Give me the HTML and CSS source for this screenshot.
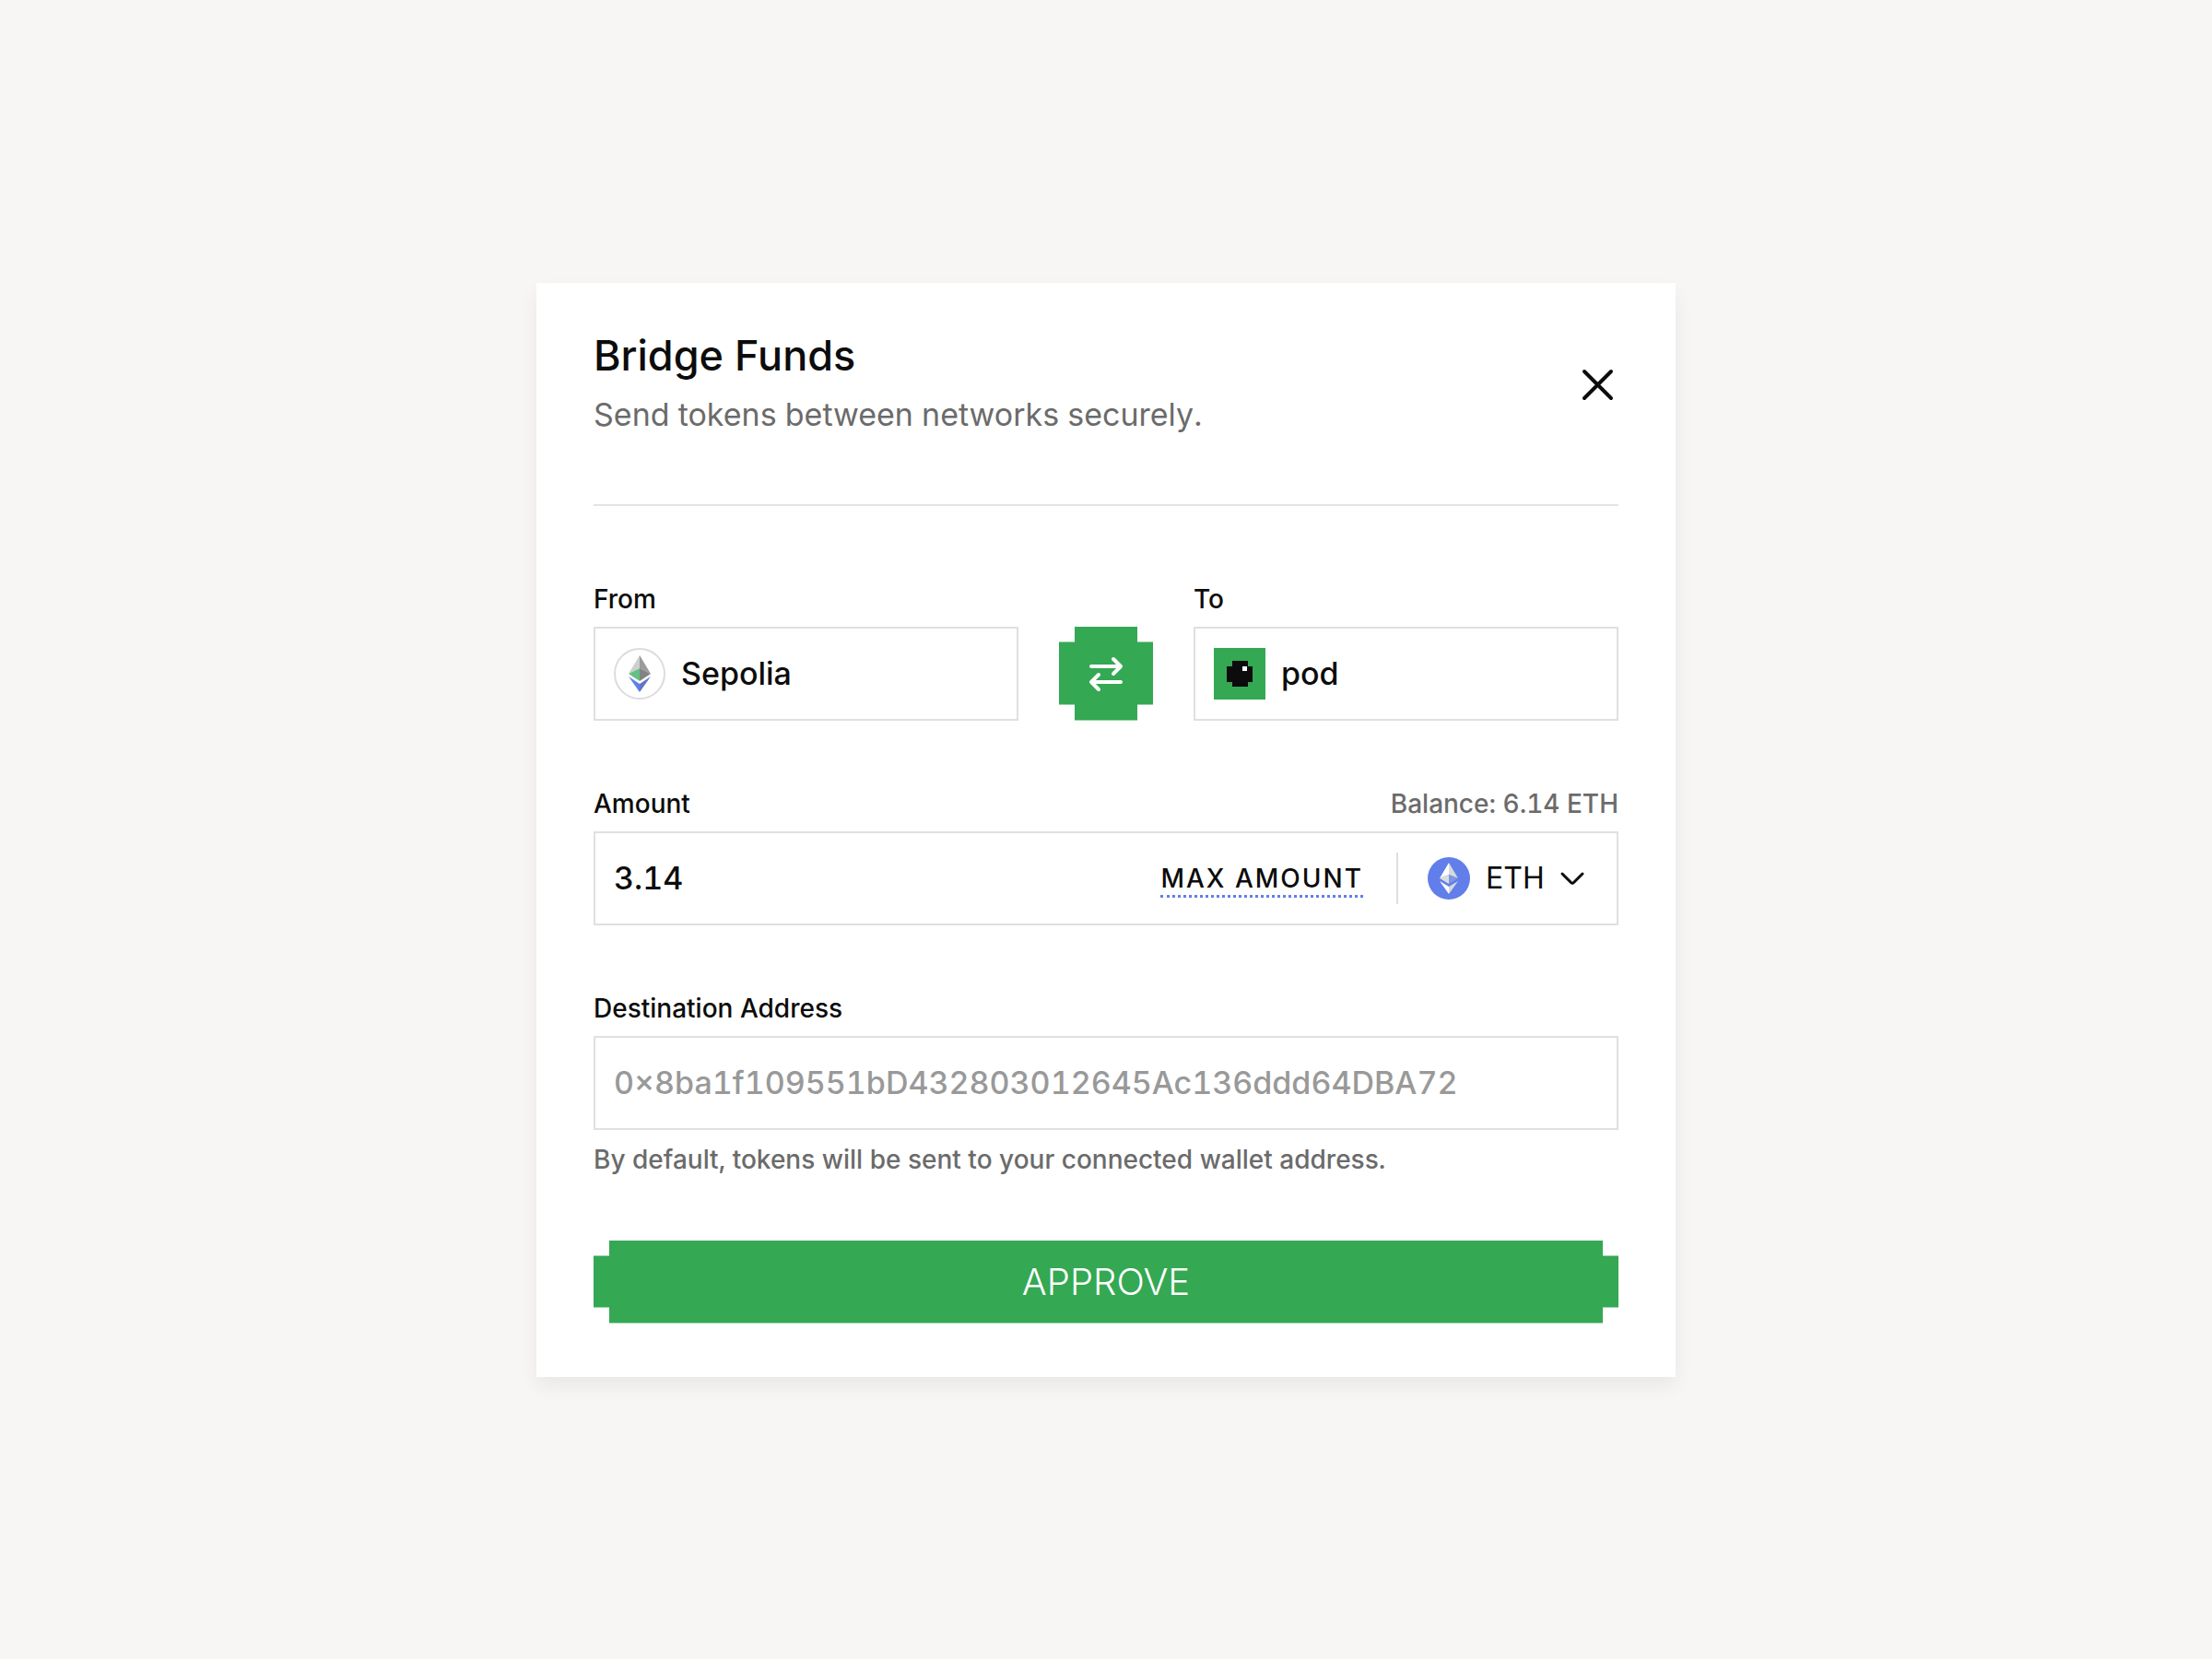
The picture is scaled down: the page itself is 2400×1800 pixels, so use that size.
FILE: index.html
```html
<!DOCTYPE html>
<html lang="en">
<head>
  <meta charset="UTF-8">
  <meta name="viewport" content="width=device-width, initial-scale=1.0">
  <title>Bridge Funds</title>
  <link rel="stylesheet" href="styles.css">
</head>
<body>
  <main class="card">
    <!-- Header -->
    <header class="card-header">
      <div class="heading">
        <h1>Bridge Funds</h1>
        <p>Send tokens between networks securely.</p>
      </div>
      <button type="button" class="close" aria-label="Close">
        <svg viewBox="0 0 46 46" fill="none" stroke="currentColor" stroke-width="4" stroke-linecap="round">
          <path d="M9 8l29 29M38 8L9 37"/>
        </svg>
      </button>
    </header>

    <form class="form">
      <!-- Networks -->
      <div class="networks">
        <div class="field">
          <label for="from">From</label>
          <button type="button" class="box network" id="from">
            <svg class="network-icon" viewBox="0 0 56 56">
              <circle cx="28" cy="28" r="27" fill="#fff" stroke="#dcdcdc" stroke-width="2"/>
              <path d="M28 8L16 28l12-6z" fill="#cdd0ce"/>
              <path d="M28 8v14l12 6z" fill="#9a9b9a"/>
              <path d="M16 28l12-6v14z" fill="#66c083"/>
              <path d="M40 28l-12-6v14z" fill="#828483"/>
              <path d="M16 31l12 8v9z" fill="#627eea"/>
              <path d="M40 31l-12 8v9z" fill="#6077c4"/>
            </svg>
            <span>Sepolia</span>
          </button>
        </div>

        <button type="button" class="swap" aria-label="Swap networks">
          <svg viewBox="0 0 40 40" fill="none" stroke="currentColor" stroke-width="4" stroke-linecap="round" stroke-linejoin="round">
            <path d="M4 12h32M28 4l8 8-8 8"/>
            <path d="M36 29H4M12 21l-8 8 8 8"/>
          </svg>
        </button>

        <div class="field">
          <label for="to">To</label>
          <button type="button" class="box network" id="to">
            <svg class="network-icon" viewBox="0 0 56 56" shape-rendering="crispEdges">
              <path d="M0 0h56v56H0z" fill="#34a853"/>
              <path d="M20 14h17v6h5v17h-5v5H20v-5h-6V20h6z" fill="#0c0c0c"/>
              <path d="M31 20h5v5h-5z" fill="#fff"/>
            </svg>
            <span>pod</span>
          </button>
        </div>
      </div>

      <!-- Amount -->
      <div class="field">
        <div class="label-row">
          <label for="amount">Amount</label>
          <span class="balance">Balance: 6.14 ETH</span>
        </div>
        <div class="box amount-box">
          <input type="text" id="amount" value="3.14" inputmode="decimal">
          <button type="button" class="max">MAX AMOUNT</button>
          <div class="token">
            <svg class="token-icon" viewBox="0 0 46 46">
              <circle cx="23" cy="23" r="23" fill="#627eea"/>
              <path d="M23 6L13 23l10-4z" fill="#fff"/>
              <path d="M23 6v13l10 4z" fill="#d5dbd8"/>
              <path d="M13 23l10-4v10z" fill="#d9deda"/>
              <path d="M33 23l-10-4v10z" fill="#7f95e4"/>
              <path d="M13 26l10 6v8z" fill="#fff"/>
              <path d="M33 26l-10 6v8z" fill="#d5dbd8"/>
            </svg>
            <select id="token" aria-label="Token">
              <option>ETH</option>
            </select>
            <svg class="chevron" viewBox="0 0 28 28" fill="none" stroke="currentColor" stroke-width="3" stroke-linecap="round" stroke-linejoin="round">
              <path d="M3 9l9.500 9.500q1.500 1.500 3 0L25 9"/>
            </svg>
          </div>
        </div>
      </div>

      <!-- Destination -->
      <div class="field">
        <label for="address">Destination Address</label>
        <input type="text" class="box address" id="address" placeholder="0×8ba1f109551bD432803012645Ac136ddd64DBA72" aria-describedby="address-help">
        <p class="help" id="address-help">By default, tokens will be sent to your connected wallet address.</p>
      </div>

      <button type="submit" class="approve">APPROVE</button>
    </form>
  </main>
</body>
</html>
```

FILE: styles.css
```css
* {
  box-sizing: border-box;
}

body {
  margin: 0;
  min-height: 100vh;
  display: flex;
  justify-content: center;
  align-items: center;
  background: #f7f6f4;
  color: #0c0c0c;
  font-family: "Inter", sans-serif;
  font-size: 28px;
  line-height: 34px;
  font-variant-numeric: tabular-nums;
}

h1,
p {
  margin: 0;
}

button,
input,
select {
  margin: 0;
  padding: 0;
  border: none;
  background: none;
  color: inherit;
  font: inherit;
  font-variant-numeric: tabular-nums;
}

button {
  cursor: pointer;
}

svg {
  display: block;
  flex: none;
}

/* Card */
.card {
  width: 100%;
  max-width: 1236px;
  padding: 56px 62px 58px;
  background: #fff;
  box-shadow: 0 10px 20px rgba(0, 0, 0, 0.06);
}

.card-header {
  display: flex;
  justify-content: space-between;
  align-items: center;
  padding-bottom: 74px;
}

.heading {
  display: flex;
  flex-direction: column;
  gap: 18px;
}

.heading h1 {
  font-size: 45px;
  font-weight: 500;
  line-height: 46px;
}

.heading p {
  color: #6b6b6b;
  font-size: 34px;
  line-height: 46px;
}

.close svg {
  width: 46px;
  height: 46px;
}

/* Form */
.form {
  display: flex;
  flex-direction: column;
  gap: 73px;
  padding-top: 84px;
  border-top: 2px solid #e4e4e4;
}

.field {
  display: flex;
  flex-direction: column;
  gap: 13px;
}

.field label {
  font-weight: 500;
}

.box {
  display: flex;
  align-items: center;
  width: 100%;
  height: 102px;
  padding: 0 20px;
  border: 2px solid #e0e0e0;
  font-size: 34px;
  font-weight: 500;
}

/* Networks */
.networks {
  display: grid;
  grid-template-columns: 1fr 102px 1fr;
  align-items: end;
  gap: 44px;
}

.network {
  gap: 17px;
}

.network-icon {
  width: 56px;
  height: 56px;
}

.swap,
.approve {
  background: #34a853;
  color: #fff;
  clip-path: polygon(17px 0, calc(100% - 17px) 0, calc(100% - 17px) 17px, 100% 17px, 100% calc(100% - 17px), calc(100% - 17px) calc(100% - 17px), calc(100% - 17px) 100%, 17px 100%, 17px calc(100% - 17px), 0 calc(100% - 17px), 0 17px, 17px 17px);
}

.swap {
  display: flex;
  justify-content: center;
  align-items: center;
  height: 102px;
}

.swap svg {
  width: 40px;
  height: 40px;
}

/* Amount */
.label-row {
  display: flex;
  justify-content: space-between;
}

.balance,
.help {
  color: #6b6b6b;
  font-weight: 500;
}

.amount-box input {
  flex: 1;
  min-width: 0;
}

.max {
  padding-top: 4px;
  border-bottom: 3px dotted #627eea;
  font-size: 28px;
  line-height: 36px;
  letter-spacing: 2px;
}

.token {
  display: flex;
  align-items: center;
  height: 56px;
  margin-left: 36px;
  padding: 0 14px 0 32px;
  border-left: 2px solid #e0e0e0;
}

.token-icon {
  width: 46px;
  height: 46px;
}

.token select {
  appearance: none;
  padding: 0 44px 0 17px;
  font-size: 32px;
  font-weight: 400;
}

.chevron {
  width: 28px;
  height: 28px;
  margin-left: -28px;
  pointer-events: none;
}

/* Destination */
.address::placeholder {
  color: #999;
  opacity: 1;
}

.help {
  margin-top: 4px;
  line-height: 30px;
}

.approve {
  height: 90px;
  font-size: 40px;
  font-weight: 300;
}
```
